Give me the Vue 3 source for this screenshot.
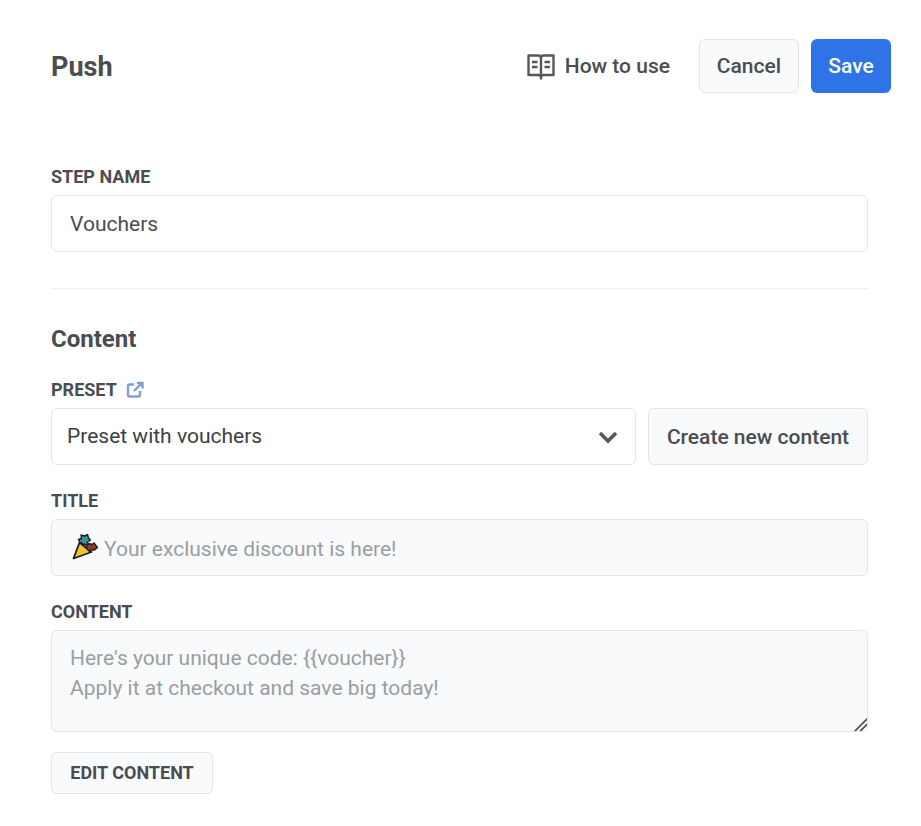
<script setup>
import { ref } from "vue";

const stepName = ref("Vouchers");
const preset = ref("Preset with vouchers");
const title = ref("Your exclusive discount is here!");
const content = ref("Here's your unique code: {{voucher}}\nApply it at checkout and save big today!");
</script>

<template>
  <div class="page">
    <header class="top">
      <h1 class="page-title">Push</h1>
      <div class="actions">
        <a class="help">
          <svg class="book" width="28" height="26" viewBox="0 0 28 26" fill="none" stroke="#55585b" stroke-width="2.400">
            <path d="M1.500 1.500h9.500c1.600 0 3 .8 3 2.200 0-1.400 1.400-2.200 3-2.200h9.500v19.500h-9.500c-1.600 0-3 .6-3 2 0-1.400-1.400-2-3-2H1.500z" stroke-linejoin="round" />
            <path d="M14 3.500V25.500" />
            <path d="M5 8h5.500M5 13h5.500M17.500 8H23M17.500 13H23" />
          </svg>
          <span>How to use</span>
        </a>
        <button class="btn btn-cancel">Cancel</button>
        <button class="btn btn-save">Save</button>
      </div>
    </header>

    <main class="form">
      <section class="step">
        <label class="label">STEP NAME</label>
        <input class="field" v-model="stepName" />
      </section>

      <hr class="divider" />

      <h2 class="section-title">Content</h2>

      <label class="label label-preset">
        PRESET
        <svg class="ext" width="18" height="18" viewBox="0 0 18 18" fill="none" stroke="#7fa0cf" stroke-width="2.400">
          <path d="M8 3.500H3.500a1.500 1.500 0 0 0-1.500 1.500v9a1.500 1.500 0 0 0 1.500 1.500h9a1.500 1.500 0 0 0 1.500-1.500V10" />
          <path d="M11 2h5.500v5.500M16 2L8 10" />
        </svg>
      </label>
      <div class="preset-row">
        <div class="select">
          <span class="select-value">{{ preset }}</span>
          <svg class="chevron" width="20" height="14" viewBox="0 0 20 14" fill="none" stroke="#55585b" stroke-width="3.600">
            <path d="M2 3l8 8 8-8" />
          </svg>
        </div>
        <button class="btn-create">Create new content</button>
      </div>

      <label class="label label-title">TITLE</label>
      <div class="field field-disabled title-field">
        <svg class="party" width="26" height="26" viewBox="0 0 26 26">
          <path d="M7.500 8.500L1.500 24.500 19.500 18z" fill="#f6c231" stroke="#1c1c1c" stroke-width="1.800" stroke-linejoin="round" />
          <path d="M8 8.500l-1.500-3 3-1-.5-3.500 3.500 1 3-1.500 1 3.500 2 2-3 2-1 3-3.500-1z" fill="#3f8f9e" stroke="#1c1c1c" stroke-width="1.400" stroke-linejoin="round" />
          <path d="M14 13.500l2.500-4 3.500 1 2-1.500 3.500 4.500-3 2.500-3.500 0-1.500 1.500z" fill="#8e3a26" stroke="#1c1c1c" stroke-width="1.400" stroke-linejoin="round" />
        </svg>
        <span class="title-text">{{ title }}</span>
      </div>

      <label class="label label-content">CONTENT</label>
      <textarea class="field field-disabled area" readonly v-model="content"></textarea>

      <button class="btn-edit">EDIT CONTENT</button>
    </main>
  </div>
</template>

<style scoped>
.page {
  width: 921px;
  height: 826px;
  box-sizing: border-box;
  padding: 39px 30px 0 51px;
  font-family: Roboto, "Liberation Sans", sans-serif;
  color: #4a4d50;
  background: #fff;
  overflow: hidden;
}
.top {
  display: flex;
  justify-content: space-between;
  align-items: center;
  height: 54px;
}
.page-title {
  margin: 2px 0 0;
  font-size: 27px;
  font-weight: 700;
  color: #4a4d50;
}
.actions {
  display: flex;
  align-items: center;
}
.help {
  display: flex;
  align-items: center;
  gap: 10px;
  margin-right: 29px;
  font-size: 21px;
  font-weight: 500;
}
.book {
  display: block;
  margin-top: 2px;
}
.btn {
  height: 54px;
  box-sizing: border-box;
  border-radius: 6px;
  font-family: inherit;
  font-size: 21px;
  font-weight: 500;
}
.btn-cancel {
  width: 100px;
  border: 1px solid #e2e5e8;
  background: #f8fafb;
  color: #4a4d50;
  margin-right: 12px;
}
.btn-save {
  width: 80px;
  border: none;
  background: #2f74e6;
  color: #fff;
}
.form {
  width: 817px;
  margin-top: 73px;
  display: flex;
  flex-direction: column;
}
.step {
  display: flex;
  flex-direction: column;
}
.label {
  display: block;
  height: 22px;
  line-height: 22px;
  margin-bottom: 7px;
  font-size: 18px;
  font-weight: 700;
  color: #4a4d50;
}
.field {
  display: block;
  width: 100%;
  box-sizing: border-box;
  height: 57px;
  padding: 0 18px;
  border: 1px solid #e2e5e8;
  border-radius: 6px;
  background: #fff;
  font-family: inherit;
  font-size: 21px;
  color: #4a4d50;
  outline: none;
}
.divider {
  width: 100%;
  margin: 36px 0 0;
  border: none;
  border-top: 1px solid #eceef0;
}
.section-title {
  margin: 35px 0 0;
  height: 30px;
  line-height: 30px;
  font-size: 24px;
  font-weight: 700;
  color: #4a4d50;
}
.label-preset {
  display: flex;
  align-items: center;
  gap: 9px;
  margin-top: 25px;
  margin-bottom: 7px;
}
.preset-row {
  display: flex;
  gap: 12px;
}
.select {
  flex: 1;
  height: 57px;
  box-sizing: border-box;
  display: flex;
  justify-content: space-between;
  align-items: center;
  padding: 0 17px 0 15px;
  border: 1px solid #e2e5e8;
  border-radius: 6px;
  font-size: 21px;
  color: #3d4043;
}
.select-value {
  margin-bottom: 2px;
}
.btn-create {
  width: 220px;
  height: 57px;
  box-sizing: border-box;
  border: 1px solid #e2e5e8;
  border-radius: 6px;
  background: #f8fafb;
  font-family: inherit;
  font-size: 21px;
  font-weight: 500;
  color: #4a4d50;
}
.label-title,
.label-content {
  margin-top: 25px;
  margin-bottom: 7px;
}
.field-disabled {
  background: #f8fafb;
  color: #999ea3;
}
.title-field {
  display: flex;
  align-items: center;
  gap: 6px;
  padding-left: 20px;
}
.title-text {
  margin-top: 2px;
}
.party {
  display: block;
  flex: none;
  margin-bottom: 2px;
}
.area {
  height: 102px;
  padding: 12px 18px;
  line-height: 30px;
  resize: vertical;
}
.area::-webkit-resizer {
  background: linear-gradient(to bottom right,
    transparent 56%, #4a4d50 57%, #4a4d50 63%, transparent 64%,
    transparent 73%, #4a4d50 74%, #4a4d50 80%, transparent 81%);
}
.btn-edit {
  align-self: flex-start;
  width: 162px;
  height: 42px;
  margin-top: 20px;
  padding-bottom: 3px;
  border: 1px solid #e2e5e8;
  border-radius: 6px;
  background: #f8fafb;
  font-family: inherit;
  font-size: 18px;
  font-weight: 700;
  color: #4a4d50;
}
</style>
